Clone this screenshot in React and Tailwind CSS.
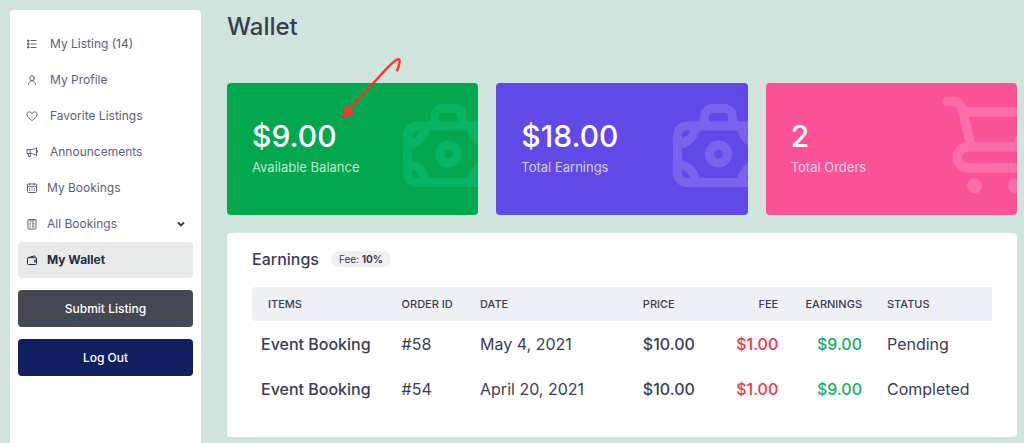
const icons = {
  list: (
    <g fill="none" stroke="currentColor" strokeWidth="1">
      <path d="M4.500 2.500H10.500M4.500 6H10.500M4.500 9.500H10.500" />
      <path d="M1.500 2h1.600v1.200H1.500zM1.500 5.400h1.600v1.200H1.500zM1.500 8.800h1.600v1.200H1.500zM2.300 2v8" fill="currentColor" strokeWidth="0.700" />
    </g>
  ),
  user: (
    <g fill="none" stroke="currentColor" strokeWidth="1" strokeLinecap="round">
      <ellipse cx="6" cy="4.200" rx="2.200" ry="2.600" />
      <path d="M2.500 10.500C2.600 8.500 3.600 7.600 4.800 7M9.500 10.500C9.400 8.500 8.400 7.600 7.200 7" />
    </g>
  ),
  heart: (
    <path
      d="M6 10.500C3.500 8.700 1 6.900 1 4.400 1 2.700 2.200 1.900 3.300 1.900c1.200 0 2.100.7 2.700 1.700.6-1 1.500-1.700 2.700-1.700 1.100 0 2.300.8 2.300 2.500 0 2.500-2.500 4.300-5 6.100z"
      fill="none"
      stroke="currentColor"
      strokeWidth="1"
      strokeLinejoin="round"
    />
  ),
  horn: (
    <g fill="none" stroke="currentColor" strokeWidth="1" strokeLinejoin="round">
      <path d="M1 3.500h3.500C7 3.500 8.800 2.800 10.500 1.800v8C8.800 8.400 7 7.500 4.500 7.500H1z" />
      <path d="M4.200 3.500v4M2 7.500l.6 3h1.900l-.5-3M10.500 4.700h.8v1.800h-.8" />
    </g>
  ),
  calendar: (
    <g fill="none" stroke="currentColor" strokeWidth="1">
      <rect x="1.500" y="2" width="9" height="8.500" rx="1" />
      <path d="M1.500 4.300h9M3.700 1v2M8.300 1v2" />
      <path d="M3 6.300h6.500M3 8.300h6.500" strokeDasharray="1.200 1.200" />
    </g>
  ),
  clipboard: (
    <g fill="none" stroke="currentColor" strokeWidth="1">
      <rect x="2" y="1.500" width="8" height="9.500" rx="0.500" />
      <path d="M4.300 1.500h3.400v1.700H4.300zM3.600 5.200h1.200M5.800 5.200h2.600M3.600 7h1.200M5.800 7h2.600M3.600 8.900h1.200M5.800 8.900h2.600" />
    </g>
  ),
  wallet: (
    <g fill="none" stroke="currentColor" strokeWidth="1" strokeLinejoin="round">
      <rect x="1.500" y="3.700" width="9" height="6.800" rx="1" />
      <path d="M2 3.700L8.800 1.800l.7 1.900" />
      <path d="M10.500 6.200H8.600v1.600h1.900" />
    </g>
  ),
};

function NavIcon({ name }) {
  return (
    <svg viewBox="0 0 12 12" className="size-3 shrink-0" aria-hidden="true">
      {icons[name]}
    </svg>
  );
}

const nav = [
  { icon: "list", label: "My Listing (14)", wide: true },
  { icon: "user", label: "My Profile", wide: true },
  { icon: "heart", label: "Favorite Listings", wide: true },
  { icon: "horn", label: "Announcements", wide: true },
  { icon: "calendar", label: "My Bookings" },
  { icon: "clipboard", label: "All Bookings", more: true },
  { icon: "wallet", label: "My Wallet", active: true },
];

function Sidebar() {
  return (
    <aside className="min-h-screen w-[191px] shrink-0 rounded-t bg-white px-2 pt-4">
      <nav>
        <ul>
          {nav.map((item) => (
            <li key={item.label}>
              <a
                href="#"
                className={`flex h-9 items-center rounded px-2 text-xs ${item.wide ? "gap-3" : "gap-[9px]"} ${
                  item.active ? "bg-[#e8eae9] font-bold text-[#252b3d]" : "text-[#5c6075]"
                }`}
              >
                <NavIcon name={item.icon} />
                <span className="grow">{item.label}</span>
                {item.more && (
                  <svg viewBox="0 0 8 8" className="size-2 text-[#3c4052]" aria-hidden="true">
                    <path d="M1 2.500l3 3 3-3" fill="none" stroke="currentColor" strokeWidth="1.800" />
                  </svg>
                )}
              </a>
            </li>
          ))}
        </ul>
      </nav>
      <div className="mt-3 flex flex-col gap-3 text-xs font-medium text-white">
        <button className="h-[37px] rounded bg-[#444852]">Submit Listing</button>
        <button className="h-[37px] rounded bg-[#122062]">Log Out</button>
      </div>
    </aside>
  );
}

function MoneyCase() {
  return (
    <svg
      viewBox="0 0 91 83"
      className="absolute top-[21px] -right-4 w-[91px]"
      fill="none"
      stroke="currentColor"
      strokeWidth="9"
      aria-hidden="true"
    >
      <rect x="4.500" y="22" width="82" height="56.500" rx="9" />
      <path d="M31.500 22V13a8.500 8.500 0 0 1 8.500-8.500h11a8.500 8.500 0 0 1 8.500 8.500v9" />
      <circle cx="45.500" cy="50" r="9" />
      <path d="M22.500 22a18 18 0 0 1-18 18M68.500 22a18 18 0 0 0 18 18M22.500 78.500a18 18 0 0 0-18-18M68.500 78.500a18 18 0 0 1 18-18" />
    </svg>
  );
}

function Cart() {
  return (
    <svg
      viewBox="0 0 91 98"
      className="absolute top-[13px] -right-4 w-[91px]"
      fill="none"
      stroke="currentColor"
      strokeWidth="9.500"
      strokeLinecap="round"
      strokeLinejoin="round"
      aria-hidden="true"
    >
      <path d="M5 5.500h5c6 0 9.500 4 11 10L29 51M22 16H86L76 51H25.500a10.300 10.300 0 0 0 0 20.700H86" />
      <circle cx="32.500" cy="90" r="7.500" fill="currentColor" stroke="none" />
      <circle cx="73" cy="90" r="7.500" fill="currentColor" stroke="none" />
    </svg>
  );
}

function StatCard({ value, label, className, children }) {
  return (
    <section className={`relative h-[132px] overflow-hidden rounded px-[25px] pt-[34px] ${className}`}>
      {children}
      <p className="text-[30px] leading-[38px] font-medium text-white">{value}</p>
      <p className="text-[13px] leading-6 text-white/75">{label}</p>
    </section>
  );
}

function Arrow() {
  return (
    <svg
      viewBox="0 0 64 64"
      className="absolute -top-7 left-[113px] z-10 w-16 text-[#fb3430]"
      aria-hidden="true"
    >
      <path
        d="M57.200 15.500C58.500 12 60.500 6.500 59.500 4.700 57 2 47 13 38 23L10 53"
        fill="none"
        stroke="currentColor"
        strokeWidth="2.400"
        strokeLinecap="round"
      />
      <path d="M2.300 63L5.500 50 15 58.700z" fill="currentColor" stroke="currentColor" strokeWidth="0.600" />
    </svg>
  );
}

const rows = [
  { id: "#58", date: "May 4, 2021", status: "Pending" },
  { id: "#54", date: "April 20, 2021", status: "Completed" },
];

function Earnings() {
  return (
    <section className="mt-[18px] rounded bg-white px-[25px] pt-4 pb-[26px]">
      <div className="flex items-center gap-3">
        <h2 className="text-base leading-5 font-medium">Earnings</h2>
        <span className="rounded-full bg-[#eff0f5] px-2 text-[10px] leading-4">
          Fee: <b>10%</b>
        </span>
      </div>
      <table className="mt-[18px] w-full table-fixed text-left">
        <colgroup>
          <col className="w-[19%]" />
          <col className="w-[10.600%]" />
          <col className="w-[22%]" />
          <col className="w-[11%]" />
          <col className="w-[9.600%]" />
          <col className="w-[12.400%]" />
          <col />
        </colgroup>
        <thead className="text-[11px]">
          <tr className="h-[34px] *:bg-[#eff0f5] *:px-[9px] *:font-medium">
            <th className="rounded-l pl-4!">ITEMS</th>
            <th>ORDER ID</th>
            <th>DATE</th>
            <th>PRICE</th>
            <th className="pr-2! text-right">FEE</th>
            <th className="pr-4! text-right">EARNINGS</th>
            <th>STATUS</th>
          </tr>
        </thead>
        <tbody className="text-base">
          {rows.map((row) => (
            <tr key={row.id} className="h-[45px] whitespace-nowrap *:px-[9px]">
              <td className="font-medium">Event Booking</td>
              <td>{row.id}</td>
              <td>{row.date}</td>
              <td className="font-medium">$10.00</td>
              <td className="pr-2! text-right font-medium text-[#f9303f]">$1.00</td>
              <td className="pr-4! text-right font-medium text-[#15ae5c]">$9.00</td>
              <td>{row.status}</td>
            </tr>
          ))}
        </tbody>
      </table>
    </section>
  );
}

export default function App() {
  return (
    <div className="flex h-screen gap-[26px] overflow-hidden bg-[#cfe4dc] pt-[10px] pr-[7px] pl-[10px] font-['Inter',sans-serif] text-[#3a3d50]">
      <Sidebar />
      <main className="min-w-0 grow">
        <h1 className="text-2xl leading-[34px] font-medium">Wallet</h1>
        <div className="mt-[39px] grid grid-cols-3 gap-[18px]">
          <div className="relative">
            <StatCard value="$9.00" label="Available Balance" className="bg-[#03a84e] text-[#06b463]">
              <MoneyCase />
            </StatCard>
            <Arrow />
          </div>
          <StatCard value="$18.00" label="Total Earnings" className="bg-[#6149e8] text-[#7963ea]">
            <MoneyCase />
          </StatCard>
          <StatCard value="2" label="Total Orders" className="bg-[#fa5296] text-[#fb6ea7]">
            <Cart />
          </StatCard>
        </div>
        <Earnings />
      </main>
    </div>
  );
}
